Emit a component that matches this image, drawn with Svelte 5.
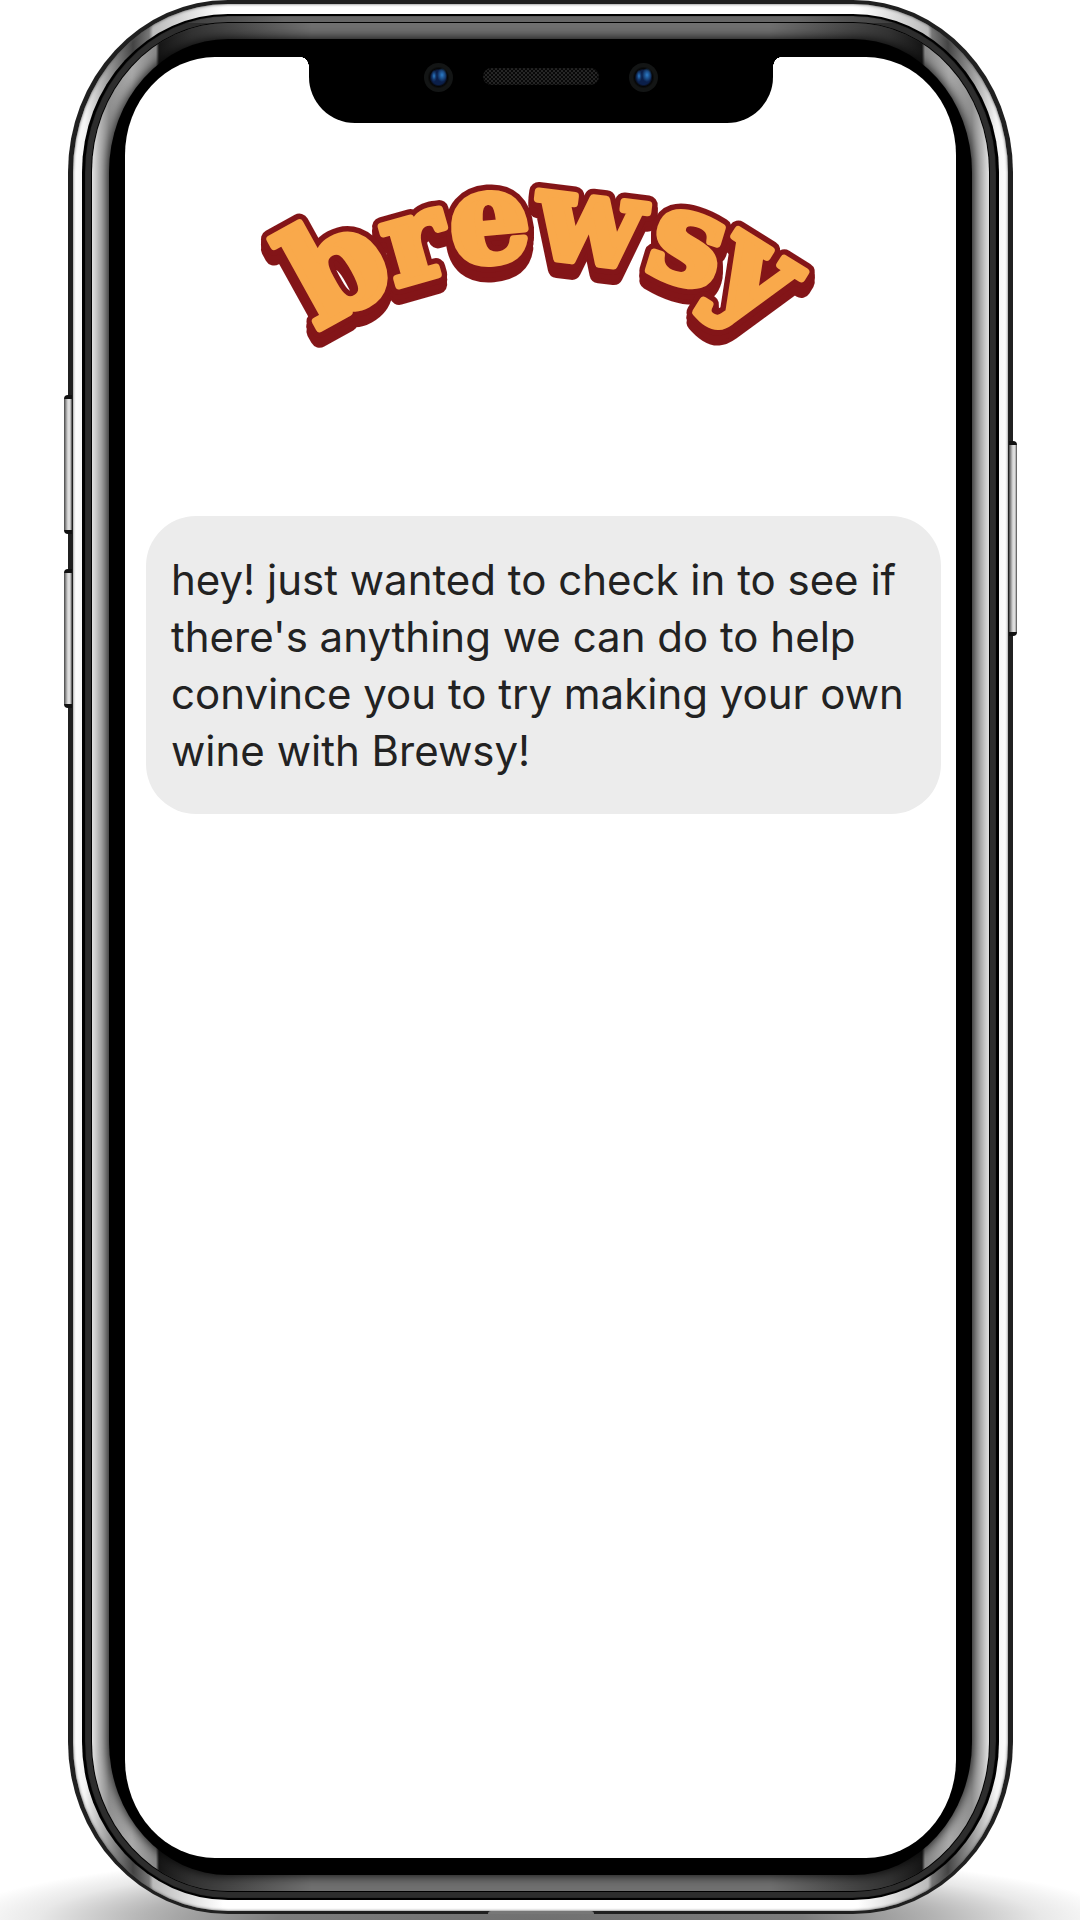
<script>
  const letters = [
    { char: 'b', x: 107, y: 147, turn: -29, size: 134 },
    { char: 'r', x: 174, y: 118, turn: -16, size: 118 },
    { char: 'e', x: 242, y: 101, turn: -5, size: 126 },
    { char: 'w', x: 334, y: 102, turn: 7, size: 124 },
    { char: 's', x: 426, y: 121, turn: 17, size: 128 },
    { char: 'y', x: 485, y: 147, turn: 32, size: 128 }
  ];
  const layers = ['outline', 'face'];
</script>

<main class="stage">
  <div class="phone">
    <span class="key volume-up"></span>
    <span class="key volume-down"></span>
    <span class="key power"></span>
    <div class="layer edge">
      <div class="layer metal">
        <div class="layer seam">
          <div class="layer band">
            <div class="layer glass">
              <div class="layer bezel">
                <div class="layer screen">
                  <div class="notch">
                    <span class="camera"></span>
                    <span class="speaker"></span>
                    <span class="camera"></span>
                  </div>
                  <header class="brand">
                    <svg class="logo" viewBox="0 0 580 210" role="img" aria-label="brewsy">
                      {#each layers as layer}
                        <g class={layer}>
                          {#each letters as l}
                            <text
                              text-anchor="middle"
                              font-size={l.size}
                              transform="translate({l.x} {l.y}) rotate({l.turn})"
                            >{l.char}</text>
                          {/each}
                        </g>
                      {/each}
                    </svg>
                  </header>
                  <section class="chat">
                    <p class="bubble">
                      hey! just wanted to check in to see if there's anything we can do to help
                      convince you to try making your own wine with Brewsy!
                    </p>
                  </section>
                </div>
              </div>
            </div>
          </div>
        </div>
      </div>
    </div>
    <span class="port"></span>
  </div>
</main>

<style>
  :global(body) {
    margin: 0;
    background: #fff;
  }
  .stage {
    box-sizing: border-box;
    min-height: 100vh;
    padding: 0 67px 6px 68px;
    display: flex;
    flex-direction: column;
    overflow: hidden;
    background: radial-gradient(ellipse 54% 72px at 50% 100%, #707070 0, #7c7c7c 45%, #b4b4b4 68%, #e8e8e8 86%, #fff 100%) no-repeat;
  }
  .phone {
    position: relative;
    display: flex;
    flex: 1;
  }
  .layer {
    display: flex;
    flex-direction: column;
    flex: 1;
    min-width: 0;
    box-sizing: border-box;
  }
  .edge {
    padding: 4px 5px 3px;
    border-radius: 160px / 172px;
    background: #202020;
  }
  .metal {
    padding: 10px 9px 11px;
    border-radius: 155px / 168px;
    background: linear-gradient(90deg, #fff 0, #f4f4f4 12px, #999 36px, #444 60px, #777 76px, #bbb 80px, #fff 150px, #fff calc(100% - 150px), #bbb calc(100% - 80px), #777 calc(100% - 76px), #444 calc(100% - 60px), #999 calc(100% - 36px), #f4f4f4 calc(100% - 12px), #fff 100%);
    box-shadow: inset 0 0 3px #555;
  }
  .seam {
    padding: 2px 3px;
    border-radius: 146px / 158px;
    background: #000;
  }
  .band {
    padding: 7px;
    border-radius: 143px / 156px;
    background:
      linear-gradient(90deg, transparent 60px, #666 200px, #666 calc(100% - 200px), transparent calc(100% - 60px)) top / 100% 7px no-repeat,
      #2d2d2d;
    box-shadow: inset 0 0 1px #000;
  }
  .glass {
    padding: 16px 17px;
    border-radius: 136px / 149px;
    background: linear-gradient(90deg, #e0e0e0 0, #b8b8b8 7px, #909090 17px, #aaa 40px, #888 64px, #161616 67px, #333 100px, #707070 220px, #707070 calc(100% - 220px), #333 calc(100% - 100px), #161616 calc(100% - 67px), #888 calc(100% - 64px), #aaa calc(100% - 40px), #909090 calc(100% - 17px), #b8b8b8 calc(100% - 7px), #e0e0e0 100%);
    box-shadow: 0 0 0 1px #000;
  }
  .bezel {
    padding: 18px 16px 17px;
    border-radius: 119px / 133px;
    background: #000;
    box-shadow: 0 0 12px #000;
  }
  .screen {
    border-radius: 90px / 98px;
    background: #fff;
  }
  .key {
    position: absolute;
    box-sizing: border-box;
    width: 8px;
    left: -4px;
    height: 139px;
    z-index: 1;
    background: linear-gradient(90deg, #444 0, #999 2px, #ddd 4px, #ddd 6px, #444 100%);
    border: solid #111;
    border-width: 4px 0;
    border-radius: 4px 0 0 4px;
  }
  .volume-up {
    top: 395px;
  }
  .volume-down {
    top: 569px;
  }
  .power {
    top: 441px;
    right: -4px;
    left: auto;
    height: 195px;
    border-radius: 0 4px 4px 0;
  }
  .port {
    position: absolute;
    bottom: 0;
    left: 50%;
    width: 106px;
    height: 3px;
    margin-left: -53px;
    border-radius: 6px 6px 0 0;
    background: #777;
  }
  .notch {
    position: relative;
    align-self: center;
    box-sizing: border-box;
    width: 464px;
    height: 66px;
    padding-top: 6px;
    display: flex;
    justify-content: center;
    align-items: flex-start;
    gap: 30px;
    background: #000;
    border-radius: 0 0 46px 46px;
  }
  .notch::before,
  .notch::after {
    content: '';
    position: absolute;
    top: 0;
    width: 8px;
    height: 10px;
  }
  .notch::before {
    right: 100%;
    background: radial-gradient(ellipse 8px 10px at 0 100%, #fff 96%, #000 100%);
  }
  .notch::after {
    left: 100%;
    background: radial-gradient(ellipse 8px 10px at 100% 100%, #fff 96%, #000 100%);
  }
  .camera {
    width: 29px;
    height: 29px;
    border-radius: 50%;
    background:
      radial-gradient(ellipse 3px 6px at 10px 13px, #2c7cc8 0, #1c4f8a88 60%, transparent 100%),
      radial-gradient(ellipse 5px 7px at 18px 12px, #2c7cc8 0, #1c4f8acc 60%, transparent 100%),
      radial-gradient(circle, #0b1f4a 0 7px, #060606 9px, #131515 11px);
  }
  .speaker {
    width: 116px;
    height: 17px;
    margin-top: 5px;
    border-radius: 9px;
    background: repeating-conic-gradient(#080808 0 25%, #262626 0 50%) 0 0 / 4px 4px;
    box-shadow: inset 0 0 2px #111;
  }
  .brand {
    display: flex;
    justify-content: center;
    padding-top: 37px;
  }
  .logo {
    display: block;
    width: 580px;
    max-width: 100%;
    overflow: visible;
    font-family: "DejaVu Serif", serif;
    font-weight: 700;
    stroke-linejoin: round;
  }
  .outline {
    fill: #831518;
    stroke: #831518;
    stroke-width: 19px;
    filter: drop-shadow(0 5px 0 #831518) drop-shadow(0 5px 0 #831518);
  }
  .face {
    fill: #f9a94b;
    stroke: #f9a94b;
    stroke-width: 8px;
  }
  .chat {
    padding: 146px 15px 32px 21px;
  }
  .bubble {
    margin: 0;
    padding: 35px 25px;
    min-height: 228px;
    border-radius: 50px;
    background: #ececec;
    color: #222;
    font-family: Inter, "Liberation Sans", sans-serif;
    font-size: 42px;
    line-height: 57px;
  }
</style>
